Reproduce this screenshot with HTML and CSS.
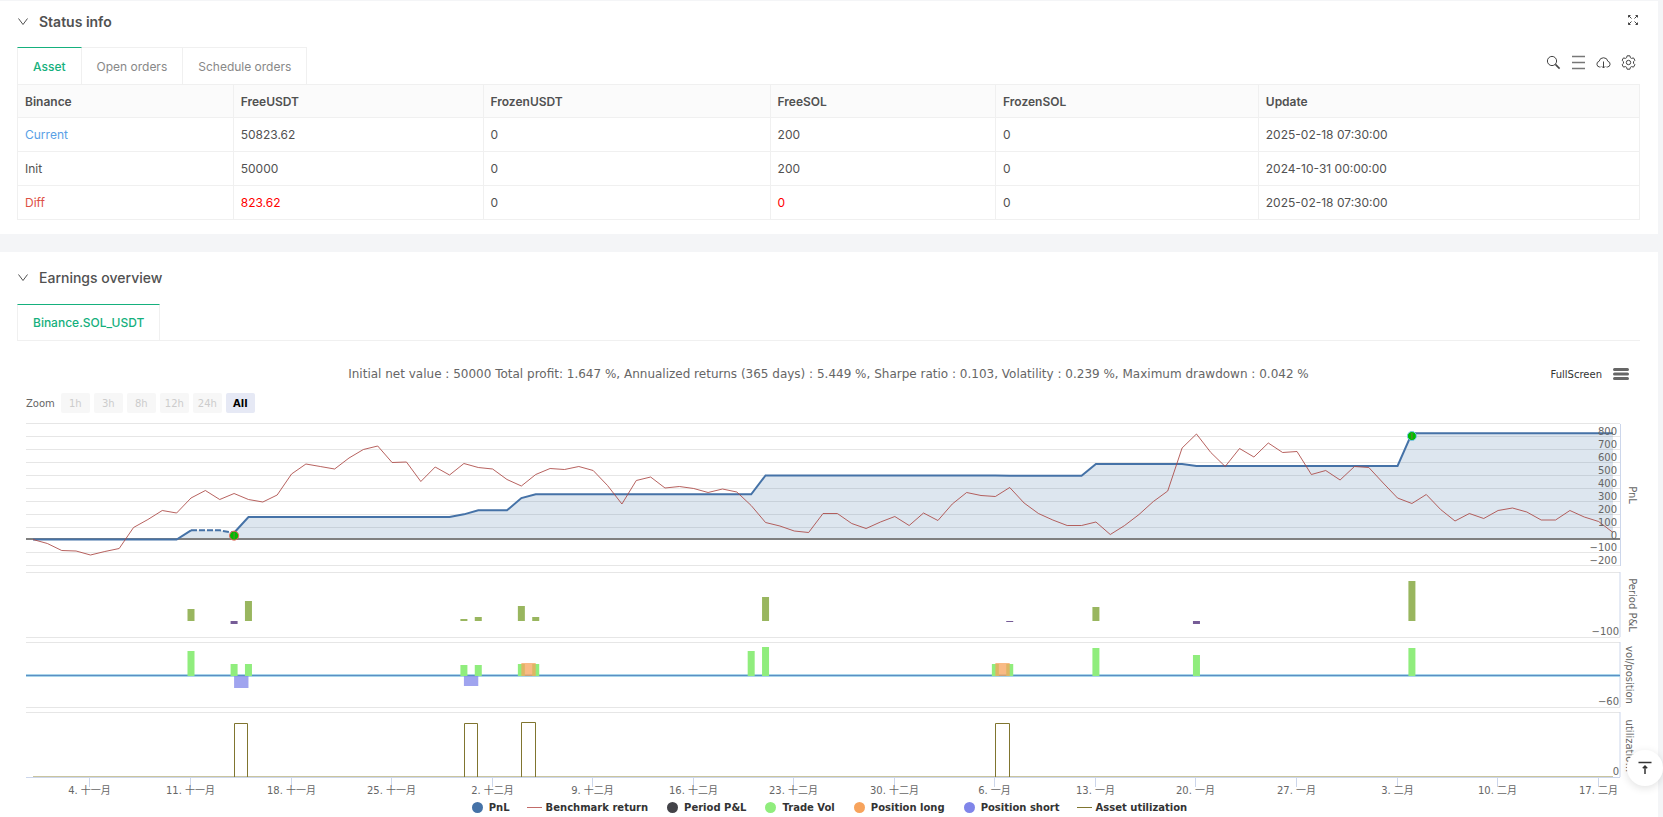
FILE: index.html
```html
<!DOCTYPE html>
<html lang="en">
<head>
    <meta charset="UTF-8">
    <meta name="viewport" content="width=device-width, initial-scale=1.0">
    <title>Backtest result</title>
    <link rel="stylesheet" href="styles.css">
</head>
<body>

    <section class="panel">
        <div class="panel-head">
            <svg class="arrow" viewBox="0 0 10 10"><path d="M0.5 1.5 L5 7.5 L9.5 1.5"/></svg>
            <h2 class="strong">Status info</h2>
            <button type="button" class="icon-btn expand" aria-label="Fullscreen">
                <svg width="12" height="12" viewBox="0 0 12 12"><path d="M1.500 3.500v-2h2M1.500 1.500l3 3M8.500 1.500h2v2M10.500 1.500l-3 3M1.500 8.500v2h2M1.500 10.500l3-3M10.500 8.500v2h-2M10.500 10.500l-3-3"/></svg>
            </button>
        </div>

        <div class="tabs">
            <button type="button" class="tab active">Asset</button>
            <button type="button" class="tab">Open orders</button>
            <button type="button" class="tab">Schedule orders</button>
            <div class="tools">
                <button type="button" class="icon-btn" aria-label="Search">
                    <svg width="15" height="15" viewBox="0 0 15 15"><circle cx="6" cy="6" r="4.6"/><path d="M9.4 9.4L13.6 13.6" stroke-width="1.5"/></svg>
                </button>
                <button type="button" class="icon-btn" aria-label="Columns">
                    <svg width="15" height="15" viewBox="0 0 15 15"><path d="M1 1.500h13M1 7.500h13M1 13.500h13" stroke="#777" stroke-width="1.3"/></svg>
                </button>
                <button type="button" class="icon-btn" aria-label="Download">
                    <svg width="15" height="15" viewBox="0 0 15 15"><path d="M4.500 12H3.600A2.900 2.900 0 0 1 3.100 6.300A4.500 4.500 0 0 1 11.900 6.300A2.900 2.900 0 0 1 11.400 12H10.500M7.500 6.500V13M5.800 11.300L7.500 13L9.200 11.300"/></svg>
                </button>
                <button type="button" class="icon-btn" aria-label="Settings">
                    <svg width="15" height="15" viewBox="0 0 15 15"><path d="M6.100 0.800h2.800l0.500 1.900l1.200 0.700l1.900-0.500l1.400 2.400l-1.400 1.400v1.600l1.400 1.400l-1.400 2.400l-1.900-0.500l-1.200 0.700l-0.500 1.900h-2.800l-0.500-1.900l-1.200-0.700l-1.900 0.500l-1.400-2.400l1.400-1.400v-1.600l-1.400-1.400l1.400-2.400l1.900 0.500l1.200-0.700z"/><circle cx="7.500" cy="7.500" r="2.200"/></svg>
                </button>
            </div>
        </div>

        <table class="asset-table">
            <colgroup>
                <col class="c1"><col class="c2"><col class="c3"><col class="c4"><col class="c5"><col>
            </colgroup>
            <thead>
                <tr>
                    <th>Binance</th>
                    <th>FreeUSDT</th>
                    <th>FrozenUSDT</th>
                    <th>FreeSOL</th>
                    <th>FrozenSOL</th>
                    <th>Update</th>
                </tr>
            </thead>
            <tbody>
                <tr>
                    <td class="current">Current</td>
                    <td>50823.62</td>
                    <td>0</td>
                    <td>200</td>
                    <td>0</td>
                    <td>2025-02-18 07:30:00</td>
                </tr>
                <tr>
                    <td>Init</td>
                    <td>50000</td>
                    <td>0</td>
                    <td>200</td>
                    <td>0</td>
                    <td>2024-10-31 00:00:00</td>
                </tr>
                <tr>
                    <td class="diff">Diff</td>
                    <td class="changed">823.62</td>
                    <td>0</td>
                    <td class="changed">0</td>
                    <td>0</td>
                    <td>2025-02-18 07:30:00</td>
                </tr>
            </tbody>
        </table>
    </section>

    <section class="panel earnings">
        <div class="panel-head">
            <svg class="arrow" viewBox="0 0 10 10"><path d="M0.5 1.5 L5 7.5 L9.5 1.5"/></svg>
            <h2>Earnings overview</h2>
        </div>

        <div class="tabs">
            <button type="button" class="tab active">Binance.SOL_USDT</button>
        </div>

        <div class="chart">
            <div class="chart-head">
                <p class="chart-title">Initial net value : 50000 Total profit: 1.647 %, Annualized returns (365 days) : 5.449 %, Sharpe ratio : 0.103, Volatility : 0.239 %, Maximum drawdown : 0.042 %</p>
                <div class="chart-menu">
                    <button type="button" class="fullscreen">FullScreen</button>
                    <button type="button" class="icon-btn" aria-label="Chart menu">
                        <svg class="burger" width="16" height="14" viewBox="0 0 16 14"><path d="M1.500 2.500h13M1.500 7h13M1.500 11.500h13"/></svg>
                    </button>
                </div>
            </div>
            <div class="zoom">
                <span>Zoom</span>
                <button type="button" disabled>1h</button>
                <button type="button" disabled>3h</button>
                <button type="button" disabled>8h</button>
                <button type="button" disabled>12h</button>
                <button type="button" disabled>24h</button>
                <button type="button" class="selected">All</button>
            </div>
            <svg id="plot" class="plot"></svg>
            <ul class="legend">
                <li><i class="dot pnl"></i>PnL</li>
                <li><i class="line bench"></i>Benchmark return</li>
                <li><i class="dot period"></i>Period P&amp;L</li>
                <li><i class="dot vol"></i>Trade Vol</li>
                <li><i class="dot long"></i>Position long</li>
                <li><i class="dot short"></i>Position short</li>
                <li><i class="line util"></i>Asset utilization</li>
            </ul>
        </div>
    </section>

    <button type="button" class="to-top" aria-label="Back to top">
        <svg width="14" height="14" viewBox="0 0 14 14"><path d="M0.500 1.500h13M7 13V5M4.800 7.200L7 5L9.200 7.200"/></svg>
    </button>

    <script src="script.js"></script>
</body>
</html>
```
FILE: styles.css
```css
* {
    box-sizing: border-box;
}

body {
    margin: 0;
    padding: 1px 5px 0 0;
    min-height: 100vh;
    display: flex;
    flex-direction: column;
    gap: 18px;
    background-color: #f4f5f7;
    font-family: Inter, "Liberation Sans", sans-serif;
    font-size: 12px;
    color: #515151;
}

button {
    margin: 0;
    padding: 0;
    border: none;
    background: none;
    font-family: inherit;
    cursor: pointer;
}

.panel {
    background-color: #fff;
    padding: 0 18px 14px 17px;
}

.earnings {
    flex: 1;
    padding-bottom: 2px;
}

.panel-head {
    display: flex;
    align-items: center;
    height: 42px;
    margin-bottom: 4px;
}

.earnings .panel-head {
    height: 52px;
    margin-bottom: 0;
}

h2 {
    margin: 0;
    font-size: 14px;
    line-height: 20px;
    font-weight: 500;
    color: #515151;
}

.strong {
    font-weight: 600;
}

.arrow {
    width: 10px;
    height: 10px;
    margin: 0 11px 0 1px;
    fill: none;
    stroke: #515151;
}

.icon-btn {
    display: flex;
}

.icon-btn svg {
    fill: none;
    stroke: #444;
}

.expand {
    margin: 0 1px 4px auto;
}

.tabs {
    display: flex;
    height: 37px;
}

.earnings .tabs {
    border-bottom: 1px solid #f0f0f0;
}

.tab {
    padding: 0 15px;
    border: 1px solid #f0f0f0;
    border-left-width: 0;
    border-bottom: none;
    font-size: 12px;
    color: #888;
}

.tab:first-child {
    border-left-width: 1px;
}

.tab.active {
    border-top-color: #15b07d;
    color: #15b07d;
    font-weight: 500;
}

.tools {
    display: flex;
    align-items: center;
    gap: 10px;
    margin-left: auto;
    padding: 0 4px 6px 0;
}

.asset-table {
    width: 100%;
    table-layout: fixed;
    border-collapse: collapse;
}

.c1 { width: 13.3%; }
.c2 { width: 15.4%; }
.c3 { width: 17.7%; }
.c4 { width: 13.9%; }
.c5 { width: 16.2%; }

th, td {
    height: 34px;
    padding: 0 7px;
    border: 1px solid #f0f0f0;
    text-align: left;
    font-weight: 400;
}

th {
    height: 33px;
    background-color: #fbfbfb;
    font-weight: 600;
}

.current {
    color: #5a9fe6;
}

.diff {
    color: #dd5145;
}

.changed {
    color: #f00;
}

.chart {
    padding-top: 21px;
    font-family: "DejaVu Sans", "Noto Sans CJK SC", sans-serif;
    font-size: 10px;
    color: #666;
}

.chart-head {
    display: grid;
    grid-template-columns: 1fr auto 1fr;
    align-items: center;
    height: 24px;
}

.chart-title {
    grid-column: 2;
    margin: 0;
    font-size: 12px;
}

.chart-menu {
    display: flex;
    justify-content: flex-end;
    align-items: center;
    gap: 11px;
    padding-right: 11px;
}

.fullscreen {
    font-size: 10px;
    color: #333;
}

.icon-btn .burger {
    stroke: #666;
    stroke-width: 3;
    stroke-linecap: round;
}

.zoom {
    display: flex;
    align-items: center;
    gap: 4px;
    height: 20px;
    margin: 7px 0 3px;
    padding-left: 9px;
}

.zoom span {
    margin-right: 2px;
}

.zoom button {
    width: 29px;
    height: 20px;
    border-radius: 2px;
    background-color: #f7f7f7;
    font-size: 10px;
    color: #ccc;
}

.zoom .selected {
    background-color: #e6e9f5;
    color: #000;
    font-weight: 700;
}

.plot {
    display: block;
    width: 100%;
    height: 383px;
}

.plot text {
    font-size: 10px;
    fill: #666;
}

.grid {
    stroke: #e6e6e6;
}

.axis {
    stroke: #ccd6eb;
}

.zero {
    stroke: #808080;
    stroke-width: 2;
}

.pnl-area {
    fill: #4572a7;
    fill-opacity: 0.18;
}

.pnl-line {
    fill: none;
    stroke: #4572a7;
    stroke-width: 2;
}

.dashed {
    stroke-dasharray: 6 2;
}

.bench-line {
    fill: none;
    stroke: #aa4643;
    stroke-opacity: 0.85;
}

.util-line {
    fill: none;
    stroke: #80752f;
}

.util-base {
    stroke: #c9c49f;
}

.gain { fill: #99b65f; }
.loss { fill: #765c97; }
.vol-bar { fill: #90ed7d; }
.long-bar { fill: #f7a35c; fill-opacity: 0.75; }
.short-bar { fill: #8085e9; fill-opacity: 0.75; }

.vol-glow {
    stroke: #a9d5ea;
    stroke-width: 3;
}

.vol-zero {
    stroke: #5b8fc4;
}

.mark {
    fill: #0b0;
    stroke: #7cc5ec;
}

.mark-sell {
    stroke: #f0605a;
}

.mark-pin {
    stroke: #7a7a3c;
}

.legend {
    display: flex;
    justify-content: center;
    align-items: center;
    gap: 17px;
    height: 16px;
    margin: 0;
    padding: 0;
    list-style: none;
    font-weight: 700;
    color: #333;
}

.legend li {
    display: flex;
    align-items: center;
    gap: 4px;
}

.dot {
    width: 11px;
    height: 11px;
    margin: 0 2px;
    border-radius: 50%;
}

.line {
    width: 15px;
    height: 1px;
}

.pnl { background-color: #4572a7; }
.bench { background-color: #c26b68; }
.period { background-color: #434348; }
.vol { background-color: #90ed7d; }
.long { background-color: #f7a35c; }
.short { background-color: #8085e9; }
.util { background-color: #80752f; }

.to-top {
    position: fixed;
    right: 0;
    bottom: 31px;
    display: flex;
    align-items: center;
    justify-content: center;
    width: 36px;
    height: 36px;
    border-radius: 50%;
    background-color: #fff;
    box-shadow: 0 2px 8px rgba(0, 0, 0, 0.12);
}

.to-top svg {
    fill: none;
    stroke: #333;
    stroke-width: 1.5;
}
```
FILE: script.js
```javascript
// [day, value], days counted from 2024-10-31
var pnl = [[0, 0], [10, 0], [11, 71], [13, 71], [14, 52], [15, 174], [29, 174], [30, 195], [31, 226],
    [33, 226], [34, 321], [35, 350], [50, 350], [51, 497], [67, 497], [68, 494], [73, 494], [74, 585],
    [80, 585], [81, 570], [95, 570], [96, 823.62], [110, 823.62]];

var benchmark = [0, -4, -11, -11.5, -15.5, -12, -9, 12, 20, 29, 26.5, 41.5, 49, 40, 46, 40, 37.5, 44.5,
    65.5, 75.5, 73, 70.5, 81.5, 90, 93.5, 77, 77.5, 58, 72.5, 64.5, 76, 72, 70.5, 60, 53.5, 65, 71, 70,
    73, 69, 54, 35.5, 59, 62.5, 51.5, 53, 51, 47, 50.5, 47.5, 34, 17, 13.5, 8.5, 7, 26, 26, 16, 11,
    17.5, 23, 14, 26.5, 19, 35.5, 47, 44, 43, 52, 36.5, 26, 19.5, 14, 14, 17.5, 5, 14, 25, 38, 48.5,
    91.5, 105.5, 87, 73, 91, 82.5, 96.5, 87, 88, 65, 69, 59.5, 73, 72, 56.5, 41.5, 36, 45, 30, 18.5,
    26, 21, 29, 31.5, 27.5, 19.5, 19.5, 29, 22.5, 18, 7];

var period = [[11, 12], [14, -3], [15, 20], [30, 2], [31, 4], [34, 15], [35, 4], [51, 24], [68, -1],
    [74, 14], [81, -3], [96, 40]];
var volume = [[11, 25], [14, 12], [15, 12], [30, 11], [31, 11], [34, 12], [35, 12], [50, 25], [51, 29],
    [67, 12], [68, 12], [74, 28], [81, 21], [96, 28]];
var position = [[14, -12], [30, -10], [34, 13], [67, 13]];
var utilization = [[14, 53], [30, 53], [34, 54], [67, 53]];

var ticks = ['4. 十一月', '11. 十一月', '18. 十一月', '25. 十一月', '2. 十二月', '9. 十二月', '16. 十二月',
    '23. 十二月', '30. 十二月', '6. 一月', '13. 一月', '20. 一月', '27. 一月', '3. 二月', '10. 二月', '17. 二月'];

function drawChart() {
    var svg = document.getElementById('plot');
    var left = 9;
    var right = svg.clientWidth - 20;
    var step = (right - left - 14) / 110;
    var out = '';

    function x(day) {
        return left + 7 + day * step;
    }
    function line(cls, x1, y1, x2, y2) {
        out += '<line class="' + cls + '" x1="' + x1 + '" y1="' + y1 + '" x2="' + x2 + '" y2="' + y2 + '"/>';
    }
    function rect(cls, cx, w, base, v) {
        var top = v > 0 ? base - v : base;
        out += '<rect class="' + cls + '" x="' + (cx - w / 2) + '" y="' + top + '" width="' + w + '" height="' + Math.abs(v) + '"/>';
    }
    function label(str, tx, ty, anchor) {
        out += '<text x="' + tx + '" y="' + ty + '" text-anchor="' + anchor + '">' + str + '</text>';
    }
    function axisTitle(str, tx, ty) {
        out += '<text text-anchor="middle" transform="translate(' + tx + ' ' + ty + ') rotate(90)">' + str + '</text>';
    }
    function points(list, y) {
        return list.map(function (p) { return x(p[0]) + ',' + y(p[1]); }).join(' ');
    }

    // PnL pane
    var zero = 123.5;
    function yPnl(v) {
        return zero - v * 0.129;
    }
    for (var v = -200; v <= 900; v += 100) {
        if (v !== 0) {
            line('grid', left, Math.round(yPnl(v)) + 0.5, right, Math.round(yPnl(v)) + 0.5);
        }
    }
    line('axis', right + 0.5, 8, right + 0.5, 150);

    out += '<polygon class="pnl-area" points="' + points(pnl, yPnl) + ' ' + x(110) + ',' + zero + '"/>';
    line('zero', left, zero - 0.5, right, zero - 0.5);
    out += '<polyline class="pnl-line" points="' + points(pnl.slice(0, 3), yPnl) + '"/>';
    out += '<polyline class="pnl-line dashed" points="' + points(pnl.slice(2, 5), yPnl) + '"/>';
    out += '<polyline class="pnl-line" points="' + points(pnl.slice(4), yPnl) + '"/>';
    out += '<polyline class="bench-line" points="' + benchmark.map(function (b, i) {
        return x(i) + ',' + (zero - b);
    }).join(' ') + '"/>';

    [[14, 30, 'mark mark-sell'], [96, 802, 'mark']].forEach(function (m) {
        out += '<circle class="' + m[2] + '" cx="' + x(m[0]) + '" cy="' + yPnl(m[1]) + '" r="4.5"/>';
        line('mark-pin', x(m[0]), yPnl(m[1]) - 3, x(m[0]), yPnl(m[1]) + 3);
    });
    for (v = -200; v <= 800; v += 100) {
        label(String(v).replace('-', '−'), right - 3, Math.round(yPnl(v)) - 1, 'end');
    }

    // lower panes: top, bottom, lowest label
    [[156, 221, '−100'], [226, 291, '−60'], [296, 361, '0']].forEach(function (p) {
        line('grid', left, p[0] + 0.5, right, p[0] + 0.5);
        line('grid', left, p[1] + 0.5, right, p[1] + 0.5);
        line('axis', right, p[0], right, p[1]);
        label(p[2], right - 1, p[1] - 2, 'end');
    });

    period.forEach(function (p) {
        rect(p[1] > 0 ? 'gain' : 'loss', x(p[0]), 7, 205, p[1]);
    });

    line('vol-glow', left, 259.5, right, 259.5);
    line('vol-zero', left, 259.5, right, 259.5);
    volume.forEach(function (p) {
        rect('vol-bar', x(p[0]), 7, 260, p[1]);
    });
    position.forEach(function (p) {
        rect(p[1] > 0 ? 'long-bar' : 'short-bar', x(p[0] + 0.5), step, 260, p[1]);
    });

    line('axis', left, 361.5, right, 361.5);
    line('util-base', x(0), 360.5, x(110), 360.5);
    utilization.forEach(function (u) {
        var a = Math.round(x(u[0])) + 0.5;
        var b = Math.round(x(u[0] + 1)) - 0.5;
        out += '<path class="util-line" d="M' + a + ' 361V' + (360.5 - u[1]) + 'H' + b + 'V361"/>';
    });

    ticks.forEach(function (t, i) {
        var tx = Math.round(x(4 + i * 7)) - 0.5;
        line('axis', tx, 362, tx, 371);
        label(t, tx, 378, 'middle');
    });

    axisTitle('PnL', right + 9, 79);
    axisTitle('Period P&amp;L', right + 9, 189);
    axisTitle('vol/position', right + 6, 259);
    axisTitle('utilizatio…', right + 6, 330);

    svg.innerHTML = out;
}

drawChart();
window.addEventListener('resize', drawChart);
```
